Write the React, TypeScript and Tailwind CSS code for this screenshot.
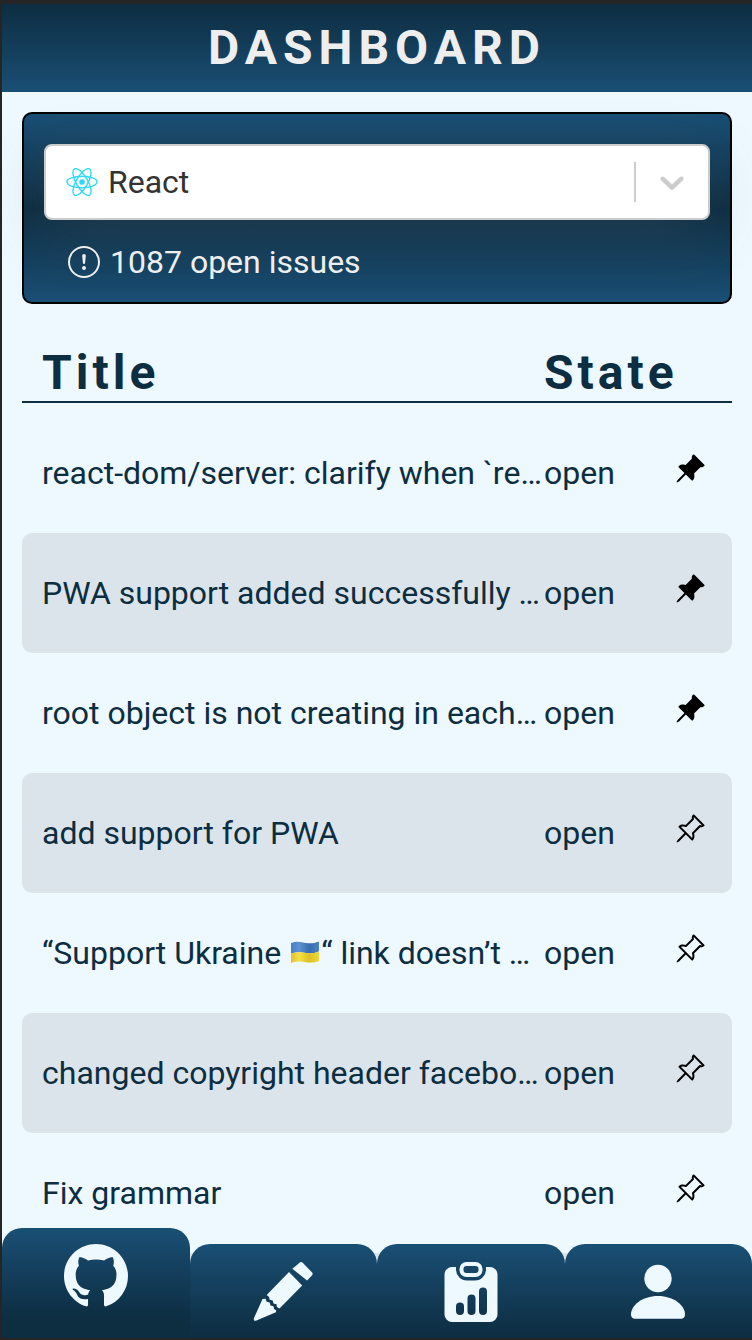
import React from 'react';
import { BsExclamationCircle, BsGithub, BsPinAngle, BsPinAngleFill } from 'react-icons/bs';

type Issue = { title: React.ReactNode; pinned: boolean };

function Flag() {
  return (
    <svg role="img" aria-label="Ukraine flag" viewBox="0 0 32 24" className="inline-block h-6 w-8 align-[-1px]">
      <defs>
        <linearGradient id="flagBlue" x1="0" x2="1" y1="0" y2="0">
          <stop offset="0" stopColor="#4a80bf" />
          <stop offset="0.3" stopColor="#5b92d2" />
          <stop offset="0.65" stopColor="#3a6cae" />
          <stop offset="1" stopColor="#4a83c6" />
        </linearGradient>
        <linearGradient id="flagYellow" x1="0" x2="1" y1="0" y2="0">
          <stop offset="0" stopColor="#e0c32b" />
          <stop offset="0.3" stopColor="#f6df45" />
          <stop offset="0.65" stopColor="#dfc021" />
          <stop offset="1" stopColor="#eed638" />
        </linearGradient>
      </defs>
      <path d="M2 2C9-.5 13 1.500 17 2s8 .5 13-1.500v10c-5 2-9 2-13 1.500s-8-1.500-15 .5z" fill="url(#flagBlue)" />
      <path d="M2 12.500c7-2 11-1 15-.5s8 .5 13-1.500V20c-5 2-9 1.500-13 1.200s-8-1.500-15 .8z" fill="url(#flagYellow)" />
    </svg>
  );
}

const issues: Issue[] = [
  { title: 'react-dom/server: clarify when `renderToString` is used', pinned: true },
  { title: 'PWA support added successfully in the project', pinned: true },
  { title: 'root object is not creating in each render', pinned: true },
  { title: 'add support for PWA', pinned: false },
  { title: <>“Support Ukraine <Flag />“ link doesn’t work on the site</>, pinned: false },
  { title: 'changed copyright header facebook to meta', pinned: false },
  { title: 'Fix grammar', pinned: false },
  { title: 'Update docs', pinned: false },
];

function ReactLogo() {
  return (
    <svg viewBox="-11.5 -10.232 23 20.463" className="h-7 w-8 shrink-0" aria-hidden="true">
      <circle r="2.05" fill="#2cd9fb" />
      <g fill="none" stroke="#2cd9fb">
        <ellipse rx="11" ry="4.2" />
        <ellipse rx="11" ry="4.2" transform="rotate(60)" />
        <ellipse rx="11" ry="4.2" transform="rotate(120)" />
      </g>
    </svg>
  );
}

function PencilIcon() {
  return (
    <svg viewBox="0 0 64 64" className="size-16" fill="currentColor" aria-hidden="true">
      <path d="M45.500 3.700 49 .7a2.300 2.300 0 0 1 3.200.1l9.200 9.500a2.300 2.300 0 0 1 0 3.200l-4.800 5.100L41.800 6.700z" transform="translate(-.5 2)" />
      <path d="M38 12 51.200 25.500 28.500 48.500l-2.600-1.500-.4-2.700-3-.7-.8-3-3-.9-.6-2.800L15.700 35z" />
      <path d="m11.500 39 3-.3 1.200 3 3 .7.8 3 2.900.8.8 3 2 1-.3 2L5.500 60.600c-2 .8-3.200-.5-2.600-2.400z" />
    </svg>
  );
}

function ReportIcon() {
  return (
    <svg viewBox="0 0 64 64" className="size-16" fill="currentColor" aria-hidden="true">
      <path
        fillRule="evenodd"
        d="M13 7.500h4v2.500a11 11 0 0 0 11 11h8a11 11 0 0 0 11-11V7.500h4a7.500 7.500 0 0 1 7.500 7.500v40a7.500 7.500 0 0 1-7.500 7.500H13A7.500 7.500 0 0 1 5.500 55V15A7.500 7.500 0 0 1 13 7.500zM17 47v4.500a4 4 0 0 0 8 0V47a4 4 0 0 0-8 0zm11.500-8v12.500a4 4 0 0 0 8 0V39a4 4 0 0 0-8 0zm11.500-7v19.500a4 4 0 0 0 8 0V32a4 4 0 0 0-8 0z"
        transform="translate(0 -.5)"
      />
      <rect x="22.500" y="4" width="19" height="11" rx="5" fill="none" stroke="currentColor" strokeWidth="4" />
    </svg>
  );
}

function PersonIcon() {
  return (
    <svg viewBox="0 0 64 64" className="size-16" fill="currentColor" aria-hidden="true">
      <circle cx="32" cy="18.500" r="13.700" />
      <path d="M32 36c16 0 27 9.500 27 18.500 0 2.500-1.500 4.300-4 4.300H9c-2.500 0-4-1.800-4-4.300C5 45.500 16 36 32 36z" />
    </svg>
  );
}

const tabs = [
  { label: 'GitHub', icon: <BsGithub className="size-16" /> },
  { label: 'Edit', icon: <PencilIcon /> },
  { label: 'Reports', icon: <ReportIcon /> },
  { label: 'Profile', icon: <PersonIcon /> },
];

export default function App() {
  return (
    <div className="relative flex h-screen flex-col overflow-hidden border-t-4 border-b-2 border-l-2 border-[#252527] bg-[#edf8ff] font-[Roboto,sans-serif] text-[32px] leading-10 text-[#0d2d41]">
      <header className="relative z-10 flex h-[88px] shrink-0 items-center justify-center bg-linear-to-b from-[#0d2d41] to-[#1a4f75]">
        <h1 className="text-5xl font-bold tracking-[6px] text-[#eee]">DASHBOARD</h1>
      </header>

      <main className="min-h-0 flex-1 overflow-hidden px-5 pt-5">
        <section className="rounded-[10px] border-2 border-black bg-linear-to-b from-[#1a4f75] via-[#0d2d41] to-[#1a4f75] px-5 pt-[30px] pb-5">
          <label className="flex h-19 items-center rounded-lg border-2 border-[#ccc] bg-white pl-5 text-[#333] shadow-[0_14px_58px_rgba(100,100,111,0.2)]">
            <ReactLogo />
            <select aria-label="Repository" className="h-full min-w-0 flex-1 appearance-none bg-transparent pl-[10px] outline-none">
              <option>React</option>
            </select>
            <span className="h-10 w-0.5 bg-[#ccc]" />
            <svg viewBox="0 0 20 20" className="mx-4 size-10" fill="#ccc" aria-hidden="true">
              <path d="M4.516 7.548c0.436-0.446 1.043-0.481 1.576 0l3.908 3.747 3.908-3.747c0.533-0.481 1.141-0.446 1.574 0 0.436 0.445 0.408 1.197 0 1.615-0.406 0.418-4.695 4.502-4.695 4.502-0.217 0.223-0.502 0.335-0.787 0.335s-0.570-0.112-0.789-0.335c0 0-4.287-4.084-4.695-4.502s-0.436-1.170 0-1.615z" />
            </svg>
          </label>
          <p className="mt-[22px] flex items-center gap-[10px] pl-6 text-[#eee]">
            <BsExclamationCircle className="size-8" />
            1087 open issues
          </p>
        </section>

        <table className="mt-10 w-full table-fixed border-separate border-spacing-0 text-left">
          <colgroup>
            <col />
            <col className="w-[104px]" />
            <col className="w-[84px]" />
          </colgroup>
          <thead>
            <tr className="h-[59px] text-5xl tracking-[4px]">
              <th className="border-b-2 border-[#0d2d41] p-0 pl-5 font-bold">Title</th>
              <th colSpan={2} className="border-b-2 border-[#0d2d41] p-0 font-bold">State</th>
            </tr>
          </thead>
          <tbody className="before:block before:h-[10px] before:content-['']">
            {issues.map((issue, i) => (
              <tr key={i} className="h-[120px] even:bg-[#dae4ea]">
                <td className="truncate rounded-l-[10px] p-0 pl-5">{issue.title}</td>
                <td className="p-0">open</td>
                <td className="rounded-r-[10px] p-0">
                  <button aria-label={issue.pinned ? 'Unpin issue' : 'Pin issue'} className="mx-auto mb-2 block text-black">
                    {issue.pinned ? <BsPinAngleFill className="size-8" /> : <BsPinAngle className="size-8" />}
                  </button>
                </td>
              </tr>
            ))}
          </tbody>
        </table>
      </main>

      <nav className="absolute inset-x-0 bottom-0 grid grid-cols-4 items-end text-[#edf8ff]">
        {tabs.map((tab, i) => (
          <button
            key={tab.label}
            aria-label={tab.label}
            className={
              i === 0
                ? 'flex h-[110px] justify-center rounded-t-[20px] bg-linear-to-b from-[#1a4f75] to-[#0d2d41] to-85% pt-4'
                : 'flex h-[94px] justify-center rounded-t-[20px] bg-linear-to-b from-[#1a4f75] to-[#0d2d41] pt-4'
            }
          >
            {tab.icon}
          </button>
        ))}
      </nav>
    </div>
  );
}
